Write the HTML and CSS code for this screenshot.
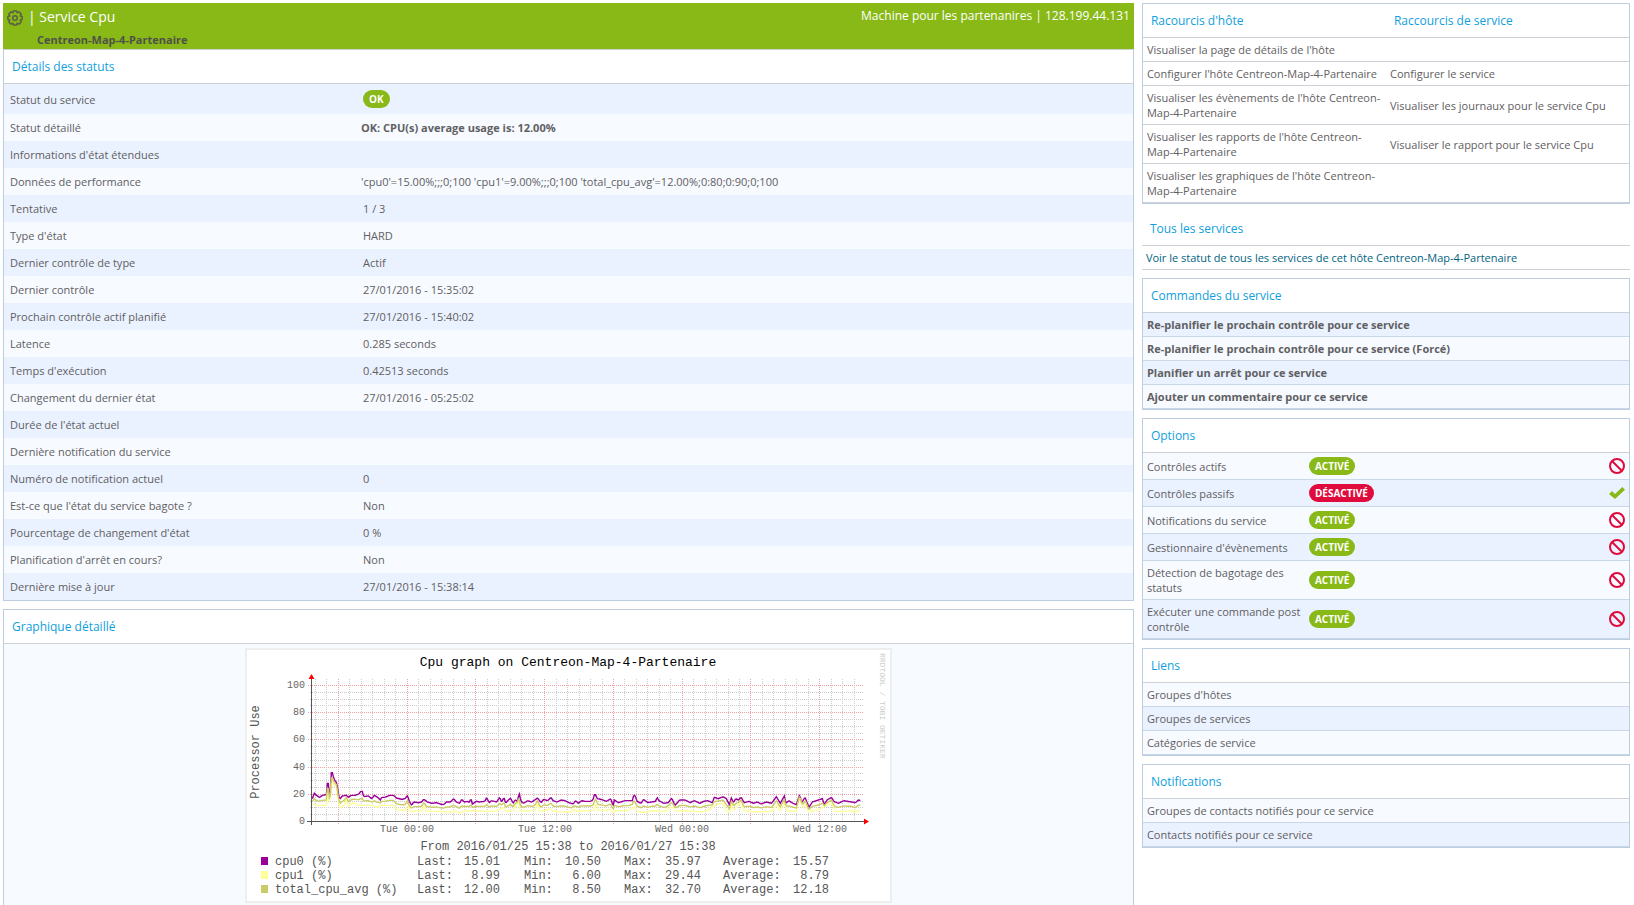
FILE: index.html
```html
<!DOCTYPE html>
<html lang="fr">
<head>
  <meta charset="UTF-8" />
  <meta name="viewport" content="width=device-width,initial-scale=1.0" />
  <title>Service Cpu - Centreon-Map-4-Partenaire</title>
  <link rel="stylesheet" href="styles.css">
</head>
<body>
  <!-- shared icons -->
  <svg class="sprite" aria-hidden="true">
    <symbol id="ico-ban" viewBox="0 0 16 16">
      <circle cx="8" cy="8" r="7" fill="none" stroke="#e00b3d" stroke-width="2" />
      <path d="M3 3l10 10" stroke="#e00b3d" stroke-width="2" />
    </symbol>
    <symbol id="ico-check" viewBox="0 0 16 16">
      <path d="M0 9L3 6l3 3 7.300-7L16 4.700L6 14z" fill="#88b917" />
    </symbol>
  </svg>

  <div class="page">
    <main>
      <header class="host-bar">
        <div class="host-title">
          <svg class="gear" viewBox="0 0 16 16" aria-hidden="true">
            <path d="M15.100 6.400V9.600L13.200 10.100L14.200 11.900L11.900 14.200L10.100 13.200L9.600 15.100H6.400L5.900 13.200L4.100 14.200L1.800 11.900L2.800 10.100L0.900 9.600V6.400L2.800 5.900L1.800 4.100L4.100 1.800L5.900 2.800L6.400 0.900H9.600L10.100 2.800L11.900 1.800L14.200 4.100L13.200 5.900Z" fill="none" stroke="#5b5f45" stroke-width="1.500" stroke-linejoin="round" />
            <circle cx="8" cy="8" r="2.300" fill="none" stroke="#5b5f45" stroke-width="1.500" />
          </svg>
          <h1>| Service Cpu</h1>
        </div>
        <p class="host-name">Centreon-Map-4-Partenaire</p>
        <p class="host-info">Machine pour les partenanires | 128.199.44.131</p>
      </header>

      <section class="panel status">
        <h2>Détails des statuts</h2>
        <table>
          <tbody>
            <tr><th>Statut du service</th><td><span class="badge ok">OK</span></td></tr>
            <tr><th>Statut détaillé</th><td class="output"><b>OK: CPU(s) average usage is: 12.00%</b></td></tr>
            <tr><th>Informations d'état étendues</th><td></td></tr>
            <tr><th>Données de performance</th><td class="output">'cpu0'=15.00%;;;0;100 'cpu1'=9.00%;;;0;100 'total_cpu_avg'=12.00%;0:80;0:90;0;100</td></tr>
            <tr><th>Tentative</th><td>1 / 3</td></tr>
            <tr><th>Type d'état</th><td>HARD</td></tr>
            <tr><th>Dernier contrôle de type</th><td>Actif</td></tr>
            <tr><th>Dernier contrôle</th><td>27/01/2016 - 15:35:02</td></tr>
            <tr><th>Prochain contrôle actif planifié</th><td>27/01/2016 - 15:40:02</td></tr>
            <tr><th>Latence</th><td>0.285 seconds</td></tr>
            <tr><th>Temps d'exécution</th><td>0.42513 seconds</td></tr>
            <tr><th>Changement du dernier état</th><td>27/01/2016 - 05:25:02</td></tr>
            <tr><th>Durée de l'état actuel</th><td></td></tr>
            <tr><th>Dernière notification du service</th><td></td></tr>
            <tr><th>Numéro de notification actuel</th><td>0</td></tr>
            <tr><th>Est-ce que l'état du service bagote ?</th><td>Non</td></tr>
            <tr><th>Pourcentage de changement d'état</th><td>0 %</td></tr>
            <tr><th>Planification d'arrêt en cours?</th><td>Non</td></tr>
            <tr><th>Dernière mise à jour</th><td>27/01/2016 - 15:38:14</td></tr>
          </tbody>
        </table>
      </section>

      <section class="panel">
        <h2>Graphique détaillé</h2>
        <div class="graph-wrap">
          <svg id="graph" class="graph" width="643" height="251" viewBox="0 0 643 251">
            <text class="title" x="321" y="16" text-anchor="middle">Cpu graph on Centreon-Map-4-Partenaire</text>
            <text class="unit" transform="translate(12 102) rotate(-90)" text-anchor="middle">Processor Use</text>
            <text class="mark" transform="translate(633 3) rotate(90)">RRDTOOL / TOBI OETIKER</text>

            <g id="grid"></g>
            <g id="lines"></g>
            <path class="axis" d="M60 171.500h558M64.500 175V28" />
            <path class="arrow" d="M64.500 24l3 5h-6zM617 168.500l5 3-5 3z" />

            <g class="tick" text-anchor="end">
              <text x="58" y="38">100</text>
              <text x="58" y="65">80</text>
              <text x="58" y="92">60</text>
              <text x="58" y="120">40</text>
              <text x="58" y="147">20</text>
              <text x="58" y="174">0</text>
            </g>
            <g class="tick" text-anchor="middle">
              <text x="160" y="182">Tue 00:00</text>
              <text x="298" y="182">Tue 12:00</text>
              <text x="435" y="182">Wed 00:00</text>
              <text x="573" y="182">Wed 12:00</text>
            </g>

            <text class="legend" x="321" y="200" text-anchor="middle">From 2016/01/25 15:38 to 2016/01/27 15:38</text>
            <g id="legend" class="legend"></g>
          </svg>
        </div>
      </section>
    </main>

    <aside>
      <section class="panel plain">
        <table>
          <thead>
            <tr><th>Racourcis d'hôte</th><th>Raccourcis de service</th></tr>
          </thead>
          <tbody>
            <tr><td><a href="#">Visualiser la page de détails de l'hôte</a></td><td></td></tr>
            <tr><td><a href="#">Configurer l'hôte Centreon-Map-4-Partenaire</a></td><td><a href="#">Configurer le service</a></td></tr>
            <tr><td><a href="#">Visualiser les évènements de l'hôte Centreon-Map-4-Partenaire</a></td><td><a href="#">Visualiser les journaux pour le service Cpu</a></td></tr>
            <tr><td><a href="#">Visualiser les rapports de l'hôte Centreon-Map-4-Partenaire</a></td><td><a href="#">Visualiser le rapport pour le service Cpu</a></td></tr>
            <tr><td><a href="#">Visualiser les graphiques de l'hôte Centreon-Map-4-Partenaire</a></td><td></td></tr>
          </tbody>
        </table>
      </section>

      <section class="all-services">
        <h2>Tous les services</h2>
        <p><a href="#">Voir le statut de tous les services de cet hôte Centreon-Map-4-Partenaire</a></p>
      </section>

      <section class="panel">
        <h2>Commandes du service</h2>
        <ul class="list commands">
          <li><a href="#">Re-planifier le prochain contrôle pour ce service</a></li>
          <li><a href="#">Re-planifier le prochain contrôle pour ce service (Forcé)</a></li>
          <li><a href="#">Planifier un arrêt pour ce service</a></li>
          <li><a href="#">Ajouter un commentaire pour ce service</a></li>
        </ul>
      </section>

      <section class="panel options">
        <h2>Options</h2>
        <table>
          <tbody>
            <tr><th>Contrôles actifs</th><td><span class="badge ok">ACTIVÉ</span></td><td><button type="button" aria-label="Désactiver"><svg><use href="#ico-ban" /></svg></button></td></tr>
            <tr><th>Contrôles passifs</th><td><span class="badge ko">DÉSACTIVÉ</span></td><td><button type="button" aria-label="Activer"><svg><use href="#ico-check" /></svg></button></td></tr>
            <tr><th>Notifications du service</th><td><span class="badge ok">ACTIVÉ</span></td><td><button type="button" aria-label="Désactiver"><svg><use href="#ico-ban" /></svg></button></td></tr>
            <tr><th>Gestionnaire d'évènements</th><td><span class="badge ok">ACTIVÉ</span></td><td><button type="button" aria-label="Désactiver"><svg><use href="#ico-ban" /></svg></button></td></tr>
            <tr><th>Détection de bagotage des statuts</th><td><span class="badge ok">ACTIVÉ</span></td><td><button type="button" aria-label="Désactiver"><svg><use href="#ico-ban" /></svg></button></td></tr>
            <tr><th>Exécuter une commande post contrôle</th><td><span class="badge ok">ACTIVÉ</span></td><td><button type="button" aria-label="Désactiver"><svg><use href="#ico-ban" /></svg></button></td></tr>
          </tbody>
        </table>
      </section>

      <section class="panel">
        <h2>Liens</h2>
        <ul class="list">
          <li>Groupes d'hôtes</li>
          <li>Groupes de services</li>
          <li>Catégories de service</li>
        </ul>
      </section>

      <section class="panel">
        <h2>Notifications</h2>
        <ul class="list">
          <li>Groupes de contacts notifiés pour ce service</li>
          <li>Contacts notifiés pour ce service</li>
        </ul>
      </section>
    </aside>
  </div>
  <script src="graph.js"></script>
</body>
</html>
```
FILE: styles.css
```css
* {
  box-sizing: border-box;
}
body {
  margin: 0;
  background: #fff;
  color: #5f6062;
  font: 11px/15px 'Open Sans', Arial, sans-serif;
}
h1, h2, p, ul {
  margin: 0;
  padding: 0;
  font-weight: normal;
}
a {
  color: inherit;
  text-decoration: none;
}
.sprite {
  display: none;
}
.page {
  display: grid;
  grid-template-columns: minmax(0, 1fr) 30%;
  gap: 8px;
  align-items: start;
  padding: 3px 4px 0 3px;
}

/* green title bar */
.host-bar {
  display: grid;
  grid-template-columns: 1fr auto;
  height: 46px;
  padding: 4px 4px 0;
  background: #88b917;
}
.host-title {
  display: flex;
  align-items: center;
  height: 20px;
}
.gear {
  width: 16px;
  height: 16px;
  margin: 2px 5px 0 0;
}
h1 {
  color: #fff;
  font-size: 14px;
  line-height: 20px;
}
.host-name {
  grid-row: 2;
  padding: 3px 0 0 30px;
  color: #4f5148;
  font-weight: bold;
}
.host-info {
  grid-row: 1;
  grid-column: 2;
  color: #fff;
  font-size: 12px;
  line-height: 18px;
}

/* panels */
.panel {
  margin-bottom: 8px;
  border: 1px solid #bccde0;
}
.host-bar + .panel {
  border-top-color: #cdd3cf;
}
h2, thead th {
  height: 34px;
  padding: 0 8px;
  border-bottom: 1px solid #cdd0d6;
  background: #fff;
  color: #10a0dd;
  font-size: 12px;
  font-weight: normal;
  line-height: 33px;
  text-align: left;
}
table {
  width: 100%;
  border-collapse: separate;
  border-spacing: 0;
  table-layout: fixed;
}
tbody th {
  font-weight: normal;
  text-align: left;
}
.status th, .status td {
  height: 27px;
  padding: 6px;
  background: #f7faff;
}
.status tr:nth-child(odd) > * {
  background: #ebf2ff;
}
.status th {
  width: 353px;
}
.status .output {
  padding-left: 4px;
}
.badge {
  display: block;
  width: max-content;
  padding: 0 6px;
  border-radius: 9px;
  color: #fff;
  font-size: 10px;
  font-weight: bold;
  line-height: 18px;
}
.badge.ok {
  background: #88b917;
}
.badge.ko {
  background: #e00b3d;
}

.plain td {
  height: 24px;
  padding: 4px;
  border-bottom: 1px solid #cdd0d6;
}
.all-services {
  margin-bottom: 8px;
}
.all-services p {
  padding: 4px;
  border-bottom: 1px solid #cdd0d6;
  color: #006482;
}

.list {
  list-style: none;
}
.list li {
  padding: 4px;
  border-bottom: 1px solid #cad7e8;
  background: #f7faff;
}
.list li:nth-child(even) {
  background: #ebf2ff;
}
.list.commands li:nth-child(odd) {
  background: #ebf2ff;
}
.list.commands li:nth-child(even) {
  background: #f7faff;
}
.commands {
  font-weight: bold;
}

.options th, .options td {
  padding: 4px;
  border-bottom: 1px solid #cad7e8;
  background: #f7faff;
}
.options tr:nth-child(even) > * {
  background: #ebf2ff;
}
.options th {
  width: calc(100% / 3);
}
.options td:last-child {
  width: 32px;
}
.options button {
  display: block;
  width: 16px;
  height: 16px;
  margin-left: auto;
  padding: 0;
  border: 0;
  background: none;
  cursor: pointer;
}
.options button svg {
  display: block;
  width: 16px;
  height: 16px;
}

/* rrd graph */
.graph-wrap {
  padding: 4px;
  background: #f7faff;
}
.graph {
  display: block;
  box-sizing: content-box;
  max-width: 100%;
  margin: 0 auto;
  border: 2px solid #eee;
  background: #fff;
  font-family: 'Liberation Mono', 'Courier New', monospace;
}
.graph text {
  white-space: pre;
}
.title {
  fill: #000;
  font-size: 13px;
}
.unit, .legend {
  fill: #555;
  font-size: 12px;
}
.tick {
  fill: #666;
  font-size: 10px;
}
.mark {
  fill: #ccc;
  font-size: 8px;
}
.axis {
  fill: none;
  stroke: #555;
}
.arrow {
  fill: #f00;
}
.grid-minor, .grid-major {
  fill: none;
  stroke: #ccc;
  stroke-dasharray: 1 1;
}
.grid-major {
  stroke: #f0a0a0;
}
.line {
  fill: none;
  stroke-width: 1.4;
}
```
FILE: graph.js
```js
const NS = 'http://www.w3.org/2000/svg';

// traces as x,y pairs, 3 units per pixel
const cpu0 = '22,116 28,100 34,106 44,112 52,106 64,104 66,70 70,70 72,100 76,104 78,38 82,38 86,54 92,66 96,68 98,90 104,118 112,108 124,106 130,112 138,106 150,106 162,102 167,94 172,94 176,110 190,108 200,116 208,106 218,112 226,120 230,112 240,112 254,106 266,106 274,114 290,118 300,116 308,106 312,122 320,136 326,126 340,128 350,126 356,118 368,126 380,130 394,128 406,132 416,134 424,126 436,126 446,116 454,126 464,130 470,118 478,126 488,124 492,128 498,116 502,132 514,124 524,126 540,124 545,112 552,128 560,122 575,126 584,112 590,126 597,112 602,130 608,122 617,114 624,130 630,120 638,124 642,98 648,124 656,130 668,122 680,126 698,114 708,128 716,118 728,122 738,112 744,122 756,126 768,120 780,122 792,128 804,132 812,122 820,130 830,122 840,124 856,124 864,120 868,104 872,104 876,116 888,118 904,124 918,116 924,140 928,120 940,128 960,122 982,122 986,106 990,106 996,124 1008,130 1016,118 1028,128 1040,126 1052,124 1056,112 1062,122 1076,130 1090,128 1100,114 1110,136 1124,120 1140,120 1156,128 1168,122 1184,130 1196,124 1208,122 1222,128 1228,112 1240,116 1254,110 1264,116 1274,136 1278,112 1286,128 1292,116 1300,120 1308,112 1318,128 1332,124 1346,130 1356,126 1368,132 1384,126 1400,130 1414,110 1426,130 1438,108 1442,130 1452,122 1460,128 1474,134 1484,104 1490,128 1500,112 1512,142 1522,126 1540,120 1552,116 1558,134 1566,120 1580,112 1586,124 1600,130 1616,122 1640,126 1652,128 1660,120 1667,122';
const cpu1 = '22,130 34,136 64,136 68,88 74,134 80,60 84,74 94,80 98,110 104,144 116,138 124,118 130,138 146,128 160,136 200,136 216,142 230,136 266,136 276,150 300,152 308,134 314,154 350,152 356,136 364,154 400,154 430,156 458,154 462,160 478,154 500,152 545,154 560,154 575,152 596,142 602,154 624,152 640,124 646,154 670,152 690,152 698,128 704,154 720,152 738,146 744,154 800,156 806,146 812,154 840,152 866,152 872,130 880,150 900,152 914,148 924,158 930,152 970,152 988,140 996,154 1020,158 1040,152 1080,154 1096,142 1104,142 1116,154 1140,152 1170,154 1190,156 1210,150 1224,140 1240,130 1254,130 1264,152 1274,158 1280,130 1288,150 1308,126 1316,152 1350,156 1400,154 1416,134 1424,154 1438,130 1446,152 1474,154 1484,112 1494,144 1502,130 1510,154 1540,150 1580,128 1590,154 1620,154 1640,152 1650,158 1667,148';

function parse(str) {
  return str.split(' ').map(p => p.split(',').map(Number));
}

function valueAt(points, x) {
  const i = points.findIndex(p => p[0] >= x);
  if (i <= 0) return points[0][1];
  const [x0, y0] = points[i - 1];
  const [x1, y1] = points[i];
  return y0 + (y1 - y0) * (x - x0) / (x1 - x0);
}

function add(parent, tag, attrs, text) {
  const el = document.createElementNS(NS, tag);
  for (const key in attrs) el.setAttribute(key, attrs[key]);
  if (text) el.textContent = text;
  document.getElementById(parent).appendChild(el);
}

function drawGrid() {
  for (let i = 1; i <= 20; i++) {
    const y = Math.round(171 - i * 6.8) + 0.5;
    add('grid', 'path', { class: i % 4 ? 'grid-minor' : 'grid-major', d: `M${i % 4 ? 63 : 61} ${y}H617` });
  }
  for (let i = 0; i < 48; i++) {
    const x = Math.round(68 + i * 11.46) + 0.5;
    if (x > 616) break;
    add('grid', 'path', { class: i % 6 === 2 ? 'grid-major' : 'grid-minor', d: `M${x} 29V${i % 6 === 2 ? 175 : 173}` });
  }
}

function drawLine(fn, color) {
  let d = '';
  for (let x = 22; x <= 1667; x += 3) {
    d += `${d ? 'L' : 'M'}${58 + x / 3} ${110 + fn(x) / 3}`;
  }
  add('lines', 'path', { class: 'line', stroke: color, d: d });
}

function drawLegend() {
  const rows = [
    ['#909', 'cpu0 (%)', '15.01', '10.50', '35.97', '15.57'],
    ['#ff9', 'cpu1 (%)', '8.99', '6.00', '29.44', '8.79'],
    ['#cc6', 'total_cpu_avg (%)', '12.00', '8.50', '32.70', '12.18']
  ];
  rows.forEach((r, i) => {
    const y = 215 + i * 14;
    add('legend', 'rect', { x: 14, y: y - 8, width: 7, height: 8, fill: r[0] });
    add('legend', 'text', { x: 28, y: y }, r[1]);
    [['Last:', 170, 253], ['Min:', 277, 354], ['Max:', 377, 454], ['Average:', 476, 582]].forEach((c, k) => {
      add('legend', 'text', { x: c[1], y: y }, c[0]);
      add('legend', 'text', { x: c[2], y: y, 'text-anchor': 'end' }, r[k + 2]);
    });
  });
}

const a = parse(cpu0);
const b = parse(cpu1);
drawGrid();
drawLine(x => valueAt(a, x), '#909');
drawLine(x => valueAt(b, x), '#ff9');
drawLine(x => (valueAt(a, x) + valueAt(b, x)) / 2, '#cc6');
drawLegend();
```
